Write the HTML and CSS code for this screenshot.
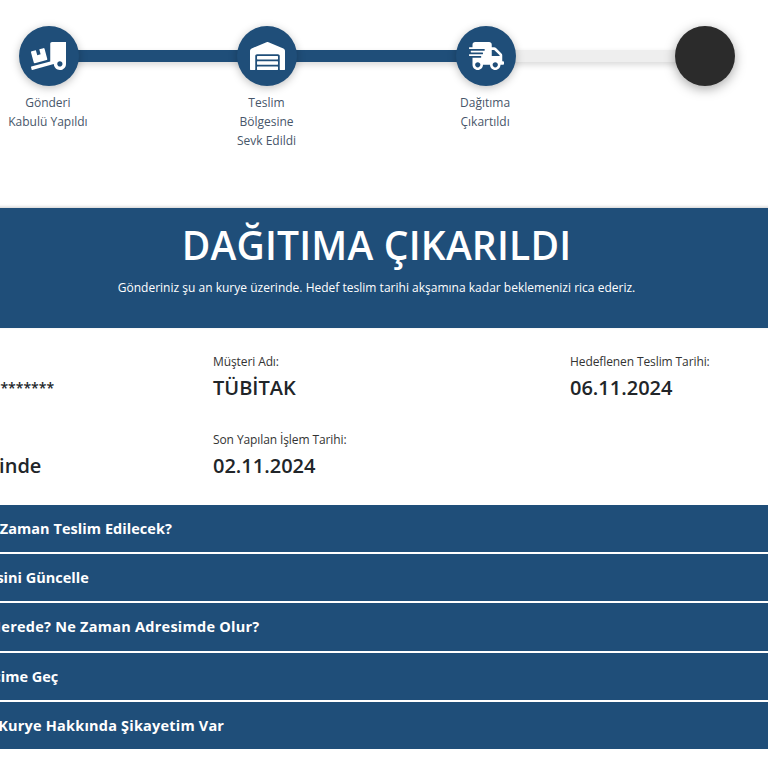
FILE: index.html
```html
<!DOCTYPE html>
<html lang="tr">
<head>
<meta charset="utf-8">
<title>Gönderi Takip</title>
<link rel="stylesheet" href="styles.css">
</head>
<body>
<div class="viewport">
<main class="page">
  <section class="stepper">
    <div class="step done">
      <div class="line"></div>
      <div class="dot"><svg class="icon" viewBox="0 0 640 512"><path d="M50.2 375.6c2.3 8.5 11.1 13.6 19.6 11.3l216.4-58c8.5-2.3 13.6-11.1 11.3-19.6l-49.7-185.5c-2.3-8.5-11.1-13.6-19.6-11.3L151 133.3l24.8 92.7-61.8 16.5-24.8-92.7-77.3 20.7C3.4 172.8-1.7 181.6.6 190.1l49.6 185.5zM384 0c-17.7 0-32 14.3-32 32v323.6L5.9 450c-4.3 1.2-6.8 5.6-5.6 9.8l12.6 46.3c1.2 4.3 5.6 6.8 9.8 5.6l393.7-107.4C418.8 464.1 467.6 512 528 512c61.9 0 112-50.1 112-112V0H384zm144 448c-26.5 0-48-21.5-48-48s21.5-48 48-48 48 21.5 48 48-21.5 48-48 48z"/></svg></div>
      <p class="step-label">Gönderi<br>Kabulü Yapıldı</p>
    </div>
    <div class="step done">
      <div class="line"></div>
      <div class="dot"><svg class="icon" viewBox="0 0 640 512"><path d="M504 352H136.4c-4.4 0-8 3.6-8 8l-.1 48c0 4.4 3.6 8 8 8H504c4.4 0 8-3.6 8-8v-48c0-4.4-3.6-8-8-8zm0 96H136.1c-4.4 0-8 3.6-8 8l-.1 48c0 4.4 3.6 8 8 8h368c4.4 0 8-3.6 8-8v-48c0-4.4-3.6-8-8-8zm0-192H136.6c-4.4 0-8 3.6-8 8l-.1 48c0 4.4 3.6 8 8 8H504c4.4 0 8-3.6 8-8v-48c0-4.4-3.6-8-8-8zm106.5-139L338.4 3.7a48.15 48.15 0 0 0-36.9 0L29.5 117C11.7 124.5 0 141.9 0 161.3V504c0 4.4 3.6 8 8 8h80c4.4 0 8-3.6 8-8V256c0-17.6 14.6-32 32.6-32h382.8c18 0 32.6 14.4 32.6 32v248c0 4.4 3.6 8 8 8h80c4.4 0 8-3.6 8-8V161.3c0-19.4-11.7-36.8-29.5-44.3z"/></svg></div>
      <p class="step-label">Teslim<br>Bölgesine<br>Sevk Edildi</p>
    </div>
    <div class="step current">
      <div class="line"></div>
      <div class="dot"><svg class="icon" viewBox="0 0 640 512"><path d="M624 352h-16V243.9c0-12.7-5.1-24.9-14.1-33.9L494 110.1c-9-9-21.2-14.1-33.9-14.1H416V48c0-26.5-21.5-48-48-48H112C85.5 0 64 21.5 64 48v48H8c-4.4 0-8 3.6-8 8v16c0 4.4 3.6 8 8 8h272c4.4 0 8 3.6 8 8v16c0 4.4-3.6 8-8 8H40c-4.4 0-8 3.6-8 8v16c0 4.4 3.6 8 8 8h208c4.4 0 8 3.6 8 8v16c0 4.4-3.6 8-8 8H8c-4.4 0-8 3.6-8 8v16c0 4.4 3.6 8 8 8h208c4.4 0 8 3.6 8 8v16c0 4.4-3.6 8-8 8H64v128c0 53 43 96 96 96s96-43 96-96h128c0 53 43 96 96 96s96-43 96-96h48c8.8 0 16-7.2 16-16v-32c0-8.8-7.2-16-16-16zM160 464c-26.5 0-48-21.5-48-48s21.5-48 48-48 48 21.5 48 48-21.5 48-48 48zm320 0c-26.5 0-48-21.5-48-48s21.5-48 48-48 48 21.5 48 48-21.5 48-48 48zm80-208H416V144h44.1l99.9 99.9V256z"/></svg></div>
      <p class="step-label">Dağıtıma<br>Çıkartıldı</p>
    </div>
    <div class="step pending">
      <div class="dot"></div>
    </div>
  </section>

  <section class="banner">
    <h1 class="banner-title">DAĞITIMA ÇIKARILDI</h1>
    <p class="banner-text">Gönderiniz şu an kurye üzerinde. Hedef teslim tarihi akşamına kadar beklemenizi rica ederiz.</p>
  </section>

  <section class="info">
    <div class="field"><span class="field-label">Takip No:</span><strong class="field-value masked">*********************</strong></div>
    <div class="field"><span class="field-label">Müşteri Adı:</span><strong class="field-value">TÜBİTAK</strong></div>
    <div class="field"><span class="field-label">Hedeflenen Teslim Tarihi:</span><strong class="field-value">06.11.2024</strong></div>
    <div class="field"><span class="field-label">Gönderi Durumu:</span><strong class="field-value">Kurye Üzerinde</strong></div>
    <div class="field"><span class="field-label">Son Yapılan İşlem Tarihi:</span><strong class="field-value">02.11.2024</strong></div>
  </section>

  <nav class="actions">
    <a class="action a1">Kargom Ne Zaman Teslim Edilecek?</a>
    <a class="action a2">Teslimat Adresini Güncelle</a>
    <a class="action a3">Kuryem Nerede? Ne Zaman Adresimde Olur?</a>
    <a class="action a4">Temsilcime Geç</a>
    <a class="action a5">Dağıtıcı Kurye Hakkında Şikayetim Var</a>
  </nav>
</main>
</div>
</body>
</html>
```

FILE: styles.css
```css
* { box-sizing: border-box; }
html, body { margin: 0; padding: 0; background: #fff; }
body { font-family: "Open Sans", "Noto Sans", sans-serif; color: #212529; }
.viewport { width: 768px; height: 768px; overflow: hidden; }
.page { width: 993px; margin-left: -120px; }

.stepper {
  display: grid;
  grid-template-columns: repeat(4, 218.6px);
  height: 208px;
  padding: 26px 0 0 59.6px;
}
.step { position: relative; display: flex; flex-direction: column; align-items: center; }
.dot {
  position: relative;
  width: 60px;
  height: 60px;
  border-radius: 50%;
  background: #1f4e79;
  display: flex;
  align-items: center;
  justify-content: center;
  box-shadow: 0 2px 8px rgba(0, 0, 0, .25);
}
.pending .dot { background: #2b2b2b; box-shadow: 0 3px 12px rgba(0, 0, 0, .35); }
.line {
  position: absolute;
  left: 50%;
  top: 24px;
  width: 218.6px;
  height: 12px;
  background: #1f4e79;
  box-shadow: 0 3px 6px rgba(0, 0, 0, .15);
}
.current .line { background: #eeeeee; }
.icon { width: 35px; height: 28px; fill: #fff; }
.step-label {
  margin: 7px 2px 0 0;
  font-size: 12px;
  line-height: 19px;
  text-align: center;
  color: #47566a;
}

.banner {
  height: 120px;
  padding-top: 12px;
  background: #1f4e79;
  color: #fff;
  text-align: center;
  box-shadow: 0 -1px 3px rgba(0, 0, 0, .2);
}
.banner-title { margin: 0; font-size: 39px; line-height: 50px; font-weight: 600; letter-spacing: .2px; }
.banner-text { margin: 9px 0 0; font-size: 12px; line-height: 18px; letter-spacing: .01px; }

.info {
  display: grid;
  grid-template-columns: 320px 357px 1fr;
  grid-auto-rows: 78px;
  padding: 25px 0 0 13px;
  height: 177px;
}
.field { display: flex; flex-direction: column; }
.field-label { font-size: 12px; line-height: 17px; letter-spacing: -.1px; color: #333; }
.field-value { margin-top: 4px; font-size: 20px; line-height: 27px; font-weight: 600; color: #212529; }
.masked { font-size: 14px; }

.actions { display: flex; flex-direction: column; gap: 2px; }
.action {
  height: 47.2px;
  display: flex;
  align-items: center;
  background: #1f4e79;
  color: #fff;
  font-size: 14.5px;
  font-weight: 700;
  white-space: nowrap;
}
.a1 { padding-left: 35px; letter-spacing: .05px; }
.a2 { padding-left: 16px; }
.a3 { padding-left: 47px; letter-spacing: .25px; }
.a4 { padding-left: 66px; }
.a5 { padding-left: 58px; letter-spacing: .2px; }
```
